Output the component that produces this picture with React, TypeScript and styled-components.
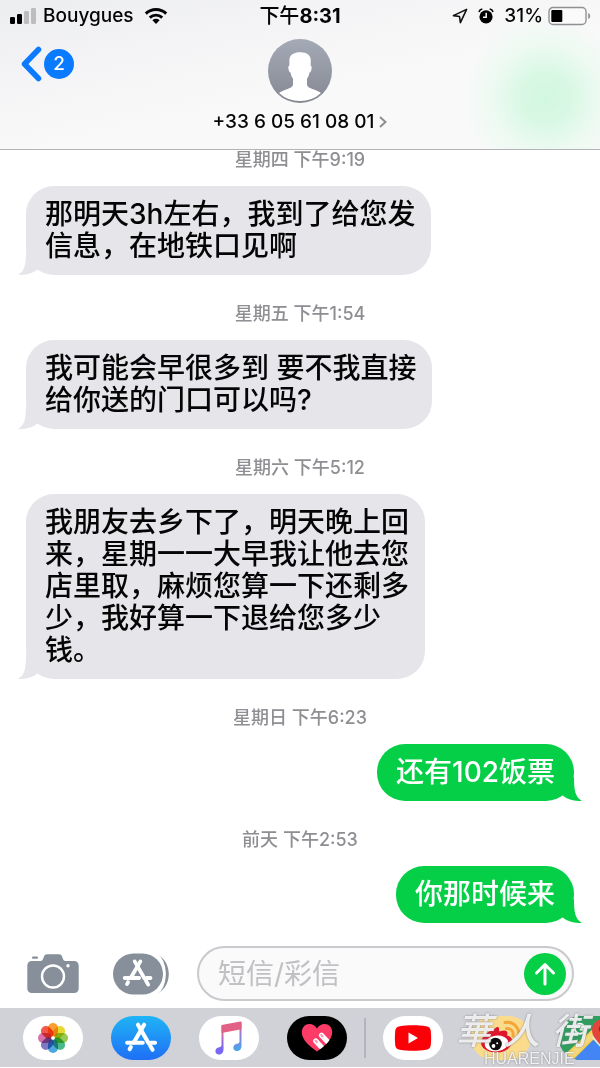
import React from "react";
import styled, { createGlobalStyle } from "styled-components";

const GlobalStyle = createGlobalStyle`
  * { box-sizing: border-box; }
  body {
    margin: 0;
    background: #fff;
    color: #050505;
    font-family: Inter, "Noto Sans CJK SC", sans-serif;
    font-weight: 500;
  }
  button { border: 0; padding: 0; background: none; font: inherit; color: inherit; cursor: pointer; }
  svg { display: block; flex: none; }
`;

const Screen = styled.div`
  min-height: 100vh;
  display: flex;
  flex-direction: column;
  overflow: hidden;
`;

const Header = styled.header`
  border-bottom: 1px solid #b4b4b8;
  background:
    radial-gradient(circle 84px at calc(100% - 54px) 98px, #d2f7df 0%, #d9f8e4 30%, rgba(232, 250, 239, 0.75) 62%, rgba(248, 249, 249, 0) 100%),
    linear-gradient(168deg, #ecedef 0%, #f4f4f6 30%, #f9f9f9 58%);
`;

const StatusBar = styled.div`
  height: 32px;
  padding: 0 9px;
  display: grid;
  grid-template-columns: 1fr auto 1fr;
  align-items: center;
  font-size: 19px;
  line-height: 32px;
`;

const StatusGroup = styled.div<{ $end?: boolean }>`
  display: flex;
  align-items: center;
  gap: ${(p) => (p.$end ? "10px" : "6px")};
  justify-content: ${(p) => (p.$end ? "flex-end" : "flex-start")};
`;

const Carrier = styled.span`
  margin-right: 4px;
`;

const Clock = styled.time`
  font-size: 20px;
  b { font-weight: 700; }
`;

const BatteryGroup = styled.span`
  display: flex;
  align-items: center;
  gap: 5px;
`;

const NavBar = styled.nav`
  padding: 7px 20px 16px;
  display: grid;
  grid-template-columns: 1fr auto 1fr;
`;

const BackButton = styled.button`
  height: 50px;
  display: flex;
  align-items: center;
  justify-self: start;
  gap: 2px;
`;

const UnreadCount = styled.span`
  width: 30px;
  height: 30px;
  border-radius: 50%;
  background: #0a7aff;
  color: #fff;
  font-size: 19px;
  line-height: 30px;
  text-align: center;
`;

const Contact = styled.button`
  display: flex;
  flex-direction: column;
  align-items: center;
  gap: 8px;
`;

const ContactName = styled.span`
  display: flex;
  align-items: center;
  gap: 5px;
  font-size: 19px;
  line-height: 22px;
`;

const Conversation = styled.main`
  flex: 1;
  padding: 0 26px 15px;
  display: flex;
  flex-direction: column;
`;

const Entry = styled.section`
  display: flex;
  flex-direction: column;
  gap: 16px;
  & + & { margin-top: 29px; }
`;

const Stamp = styled.time`
  align-self: center;
  color: #8e8e93;
  font-size: 18px;
  line-height: 20px;
`;

const Bubble = styled.p<{ $sent?: boolean }>`
  position: relative;
  align-self: ${(p) => (p.$sent ? "flex-end" : "flex-start")};
  margin: 0;
  padding: ${(p) => (p.$sent ? "12px 19px 13px 19px" : "12px 16px 13px 19px")};
  border-radius: 28px;
  background: ${(p) => (p.$sent ? "#04cf47" : "#e5e5ea")};
  color: ${(p) => (p.$sent ? "#fff" : "#050505")};
  font-size: 28px;
  line-height: 32px;
  white-space: pre-line;
`;

const Tail = styled.svg<{ $sent?: boolean }>`
  position: absolute;
  bottom: 0;
  ${(p) => (p.$sent ? "right: -8px; transform: scaleX(-1);" : "left: -8px;")}
  fill: ${(p) => (p.$sent ? "#04cf47" : "#e5e5ea")};
`;

const Composer = styled.form`
  padding: 8px 26px 7px 27px;
  display: flex;
  align-items: center;
`;

const ToolButton = styled.button`
  margin-right: 34px;
  & + & { margin-right: 28px; }
`;

const Field = styled.div`
  flex: 1;
  min-width: 0;
  height: 55px;
  padding: 0 6px 0 19px;
  display: flex;
  align-items: center;
  border: 2px solid #c9c9ce;
  border-radius: 28px;
  background: #fafafa;
`;

const MessageInput = styled.input`
  flex: 1;
  min-width: 0;
  padding: 0;
  border: 0;
  outline: 0;
  background: none;
  font: inherit;
  font-size: 28px;
  font-weight: 400;
  line-height: 40px;
  &::placeholder { color: #c0c0c5; opacity: 1; }
`;

const SendButton = styled.button`
  width: 42px;
  height: 42px;
  display: grid;
  place-items: center;
  border-radius: 50%;
  background: #04cf47;
`;

const Dock = styled.footer`
  position: relative;
  height: 59px;
  margin-bottom: 1px;
  padding-left: 23px;
  display: flex;
  align-items: center;
  background: #d1d2d8;
`;

const DockGroup = styled.div`
  display: flex;
  flex: none;
  gap: 28px;
`;

const Divider = styled.span`
  flex: none;
  width: 2px;
  height: 40px;
  margin: 0 17px;
  background: #b3b5bc;
`;

const AppButton = styled.button<{ $bg: string }>`
  width: 60px;
  height: 44px;
  flex: none;
  display: grid;
  place-items: center;
  overflow: hidden;
  border-radius: 22px;
  background: ${(p) => p.$bg};
`;

const Watermark = styled.div`
  position: absolute;
  right: 0;
  bottom: 0;
  width: 144px;
  color: rgba(255, 255, 255, 0.85);
  text-shadow: 0 0 2px #77777c;
  pointer-events: none;
`;

const WatermarkScript = styled.div`
  display: flex;
  justify-content: space-between;
  padding-right: 12px;
  font-family: "Noto Sans CJK TC", sans-serif;
  font-style: italic;
  font-size: 36px;
  line-height: 46px;
`;

const WatermarkLatin = styled.div`
  padding-left: 28px;
  font-family: "Liberation Sans", sans-serif;
  font-size: 16px;
  line-height: 16px;
`;

function SignalIcon() {
  return (
    <svg width="28" height="18" viewBox="0 0 28 18" aria-hidden="true">
      <rect x="1" y="10" width="5" height="7" rx="1.3" />
      <rect x="8" y="7" width="5" height="10" rx="1.3" />
      <rect x="15" y="4" width="5" height="13" rx="1.3" fill="#bdbdc0" />
      <rect x="22" y="1" width="5" height="16" rx="1.3" fill="#bdbdc0" />
    </svg>
  );
}

function WifiIcon() {
  return (
    <svg width="24" height="18" viewBox="0 0 24 18" fill="none" stroke="#050505" strokeWidth="2.9" aria-hidden="true">
      <path d="M1.8 6.6a14.6 14.6 0 0 1 20.4 0" />
      <path d="M5.8 10.6a9 9 0 0 1 12.4 0" />
      <path d="M12 17l-3.6-3.7a5.2 5.2 0 0 1 7.2 0z" fill="#050505" stroke="none" />
    </svg>
  );
}

function LocationIcon() {
  return (
    <svg width="16" height="16" viewBox="0 0 16 16" fill="none" stroke="#111" strokeWidth="1.6" strokeLinejoin="round" aria-hidden="true">
      <path d="M14.6 1.4 1.4 7.6l6.1.9.9 6.1z" />
    </svg>
  );
}

function AlarmIcon() {
  return (
    <svg width="16" height="16" viewBox="0 0 16 16" aria-hidden="true">
      <circle cx="8" cy="8.8" r="6.6" />
      <path d="M.9 3.900a4.400 4.400 0 0 1 3.400-2.900M15.100 3.900a4.400 4.400 0 0 0-3.400-2.900" fill="none" stroke="#050505" strokeWidth="1.500" />
      <path d="M8.200 4.800v4.500H5" fill="none" stroke="#f7f7f8" strokeWidth="1.500" />
    </svg>
  );
}

function BatteryIcon() {
  return (
    <svg width="43" height="20" viewBox="0 0 43 20" aria-hidden="true">
      <rect x="1" y="1.5" width="37" height="17" rx="4" fill="#fafafa" stroke="#8f9094" strokeWidth="1.4" />
      <rect x="3.3" y="4" width="11" height="12" rx="1" />
      <path d="M40.2 7v6c1.3-.5 2-1.600 2-3s-.7-2.500-2-3z" fill="#8f9094" />
    </svg>
  );
}

function Avatar() {
  return (
    <svg width="64" height="64" viewBox="0 0 64 64" aria-hidden="true">
      <defs>
        <linearGradient id="avatar-bg" x1="0" y1="0" x2="0" y2="1">
          <stop offset="0" stopColor="#a4aab6" />
          <stop offset="1" stopColor="#858891" />
        </linearGradient>
      </defs>
      <circle cx="32" cy="32" r="32" fill="url(#avatar-bg)" />
      <path
        d="M21.400 22c-.4-6.200 4.500-8.800 11-8.800s11 3.200 10.400 9.400l-.2 3.800c1.300.4 1.200 2.300.8 4.200-.4 1.800-.9 3-2 3.200-.5 2.800-1.200 4.400-2.400 5.800v5.600c0 2.500 2.500 3.600 5.300 4.700 3.200 1.200 6.200 2 8.700 4A31 31 0 0 1 32 62 31 31 0 0 1 11 53.900c2.500-2 5.500-2.800 8.700-4 2.800-1.100 5.300-2.200 5.300-4.700v-5.600c-1.200-1.400-1.900-3-2.400-5.800-1.100-.2-1.600-1.400-2-3.200-.4-1.900-.5-3.800.8-4.200z"
        fill="#fff"
      />
    </svg>
  );
}

function CameraIcon() {
  return (
    <svg width="52" height="40" viewBox="0 0 52 40" aria-hidden="true">
      <g fill="#868f9a">
        <rect x="5" y="2.600" width="6" height="2.200" rx="1" />
        <path d="M5 7h8.500c1.500 0 2-.8 2.500-2l1-2.600C17.500 1 18.500.3 20 .3h12c1.500 0 2.500.7 3 2.100L36 5c.5 1.200 1 2 2.500 2H47c3 0 4.700 1.700 4.700 4.700v22.600c0 3-1.700 4.700-4.700 4.700H5c-3 0-4.700-1.700-4.700-4.700V11.700C.3 8.700 2 7 5 7z" />
      </g>
      <circle cx="26" cy="22.500" r="11" fill="none" stroke="#fff" strokeWidth="2.400" />
      <circle cx="41" cy="11.800" r="1.700" fill="#fff" />
    </svg>
  );
}

function StoreGlyph() {
  return (
    <g fill="none" stroke="#fff" strokeWidth="3.800" strokeLinecap="round">
      <path d="M-2.800-11.800 7.100 5.400M8.600 7.800l2.100 3.600" />
      <path d="M2.900-11.800-6.700 4.600M-9.400 8.900l-1.100 2" />
      <path d="M-12.800 4.800H1.600M9 4.800h4" />
    </g>
  );
}

function StoreToolIcon() {
  return (
    <svg width="56" height="42" viewBox="0 0 56 42" aria-hidden="true">
      <rect x="0" y="0.500" width="50" height="41" rx="20.500" fill="#868f9a" />
      <path d="M41.500 1C48 4 52.500 10 52.500 21S48 38 41.500 41c8-1.500 14.300-9.500 14.300-20S49.500 2.500 41.500 1z" fill="#868f9a" />
      <path d="M41.500.5C48 4 51.500 11 51.500 21S48 38 41.500 41.500" fill="none" stroke="#fff" strokeWidth="2.500" />
      <g transform="translate(24.500 20.200)"><StoreGlyph /></g>
    </svg>
  );
}

function PhotosIcon() {
  const petals = ["#f9941c", "#e4d51c", "#8cc63f", "#35b27c", "#3b9ddc", "#6f6cba", "#d263a0", "#ef4636"];
  return (
    <svg width="32" height="32" viewBox="-16 -16 32 32" aria-hidden="true">
      {petals.map((color, i) => (
        <rect key={color} x="-5" y="-15" width="10" height="13.500" rx="5" fill={color} fillOpacity="0.9" transform={`rotate(${i * 45})`} style={{ mixBlendMode: "multiply" }} />
      ))}
      <circle r="1.500" fill="#fff" />
    </svg>
  );
}

function StoreIcon() {
  return (
    <svg width="36" height="36" viewBox="-18 -18 36 36" aria-hidden="true">
      <g transform="translate(0 -0.500) scale(1.080)"><StoreGlyph /></g>
    </svg>
  );
}

function MusicIcon() {
  return (
    <svg width="28" height="34" viewBox="0 0 28 34" aria-hidden="true">
      <defs>
        <linearGradient id="note" x1="0" y1="0" x2="0" y2="1">
          <stop offset="0" stopColor="#f3566b" />
          <stop offset=".3" stopColor="#d769a6" />
          <stop offset=".68" stopColor="#8266ee" />
          <stop offset="1" stopColor="#7468f4" />
        </linearGradient>
        <linearGradient id="note-right" x1="0" y1="0" x2="0" y2="1">
          <stop offset="0" stopColor="#e7587a" />
          <stop offset=".4" stopColor="#9f7ad0" />
          <stop offset="1" stopColor="#43a8ee" />
        </linearGradient>
      </defs>
      <path d="M8.500 4v24.500c0 3-2 5-4.700 5C1.700 33.500.4 32 .4 30.200c0-2.200 1.600-3.500 3.700-3.900 1.500-.3 2.400-.8 2.400-2.200V4z" fill="url(#note)" />
      <path d="M26.500 1v24c0 3-2 5-4.700 5-2.100 0-3.500-1.400-3.500-3.300 0-2.200 1.600-3.500 3.700-3.900 1.500-.3 2.500-.8 2.500-2.200V5z" fill="url(#note-right)" />
      <path d="M8 3.800 25.200.6c.9-.2 1.300.1 1.300 1v6.700L6.500 12V5.600c0-1 .4-1.600 1.500-1.800z" fill="#e25f86" />
    </svg>
  );
}

function HeartIcon() {
  return (
    <svg width="32" height="30" viewBox="0 0 32 30" aria-hidden="true">
      <defs>
        <clipPath id="heart-shape">
          <path d="M16 28.500C9 23.500.8 17 .8 9.200.8 4.500 4.200 1 8.500 1 11.500 1 14.300 2.700 16 5.500 17.700 2.700 20.500 1 23.500 1c4.300 0 7.700 3.500 7.700 8.200 0 7.800-8.200 14.300-15.200 19.300z" />
        </clipPath>
      </defs>
      <g clipPath="url(#heart-shape)">
        <rect width="32" height="30" fill="#fc3c67" />
        <g stroke="#fff" strokeWidth="5.200" strokeLinecap="round">
          <path d="M14.800 18 24 28M20.500 12.300 30 22.500" />
        </g>
        <g stroke="#fc9ab0" strokeWidth="2.200" strokeLinecap="round">
          <path d="M14.600 17.800l1.200 1.300M20.300 12.100l1.200 1.300" />
        </g>
      </g>
    </svg>
  );
}

function YoutubeIcon() {
  return (
    <svg width="38" height="28" viewBox="0 0 38 28" aria-hidden="true">
      <path d="M6 2.200C13 .9 25 .9 32 2.200c3.300.6 4.500 2 4.800 4.800.5 4.700.5 9.300 0 14-.3 2.800-1.500 4.200-4.800 4.800-7 1.300-19 1.300-26 0C2.700 25.200 1.500 23.800 1.200 21 .7 16.300.7 11.700 1.200 7 1.500 4.200 2.700 2.800 6 2.200z" fill="#fb0007" />
      <path d="M14.500 8.500v11L24 14z" fill="#fff" />
    </svg>
  );
}

function WeiboIcon() {
  return (
    <svg width="60" height="44" viewBox="0 0 60 44" aria-hidden="true">
      <path d="M34 6.500c8-1.500 15 5 13.500 13.500M35.500 12.500c4.500-.5 7.500 3 6.500 7.500" fill="none" stroke="#f3a63b" strokeWidth="3" strokeLinecap="round" />
      <path d="M24 12.500c3-2.500 4.500-1.500 4 2-.1 1 .5 1 2 .6 5-1.500 7.500.4 6 4.400 4 1 5.500 3.500 5 6.500-.8 6-7.500 10.500-16 10.500S9.500 32 10 26c.5-5 7-11 14-13.500z" fill="#e0142b" />
      <ellipse cx="25.500" cy="27.500" rx="11.800" ry="7.800" fill="#fff" transform="rotate(-7 25.500 27.500)" />
      <circle cx="24.500" cy="28" r="6.300" fill="#0c0a0a" />
      <circle cx="22.500" cy="30" r="1.900" fill="#fff" />
      <circle cx="26.200" cy="27.200" r="1" fill="#fff" />
    </svg>
  );
}

function MapsIcon() {
  return (
    <svg width="60" height="44" viewBox="0 0 60 44" aria-hidden="true">
      <rect width="60" height="44" fill="#2f9e5f" />
      <path d="M12 44 33 23l22 21z" fill="#4385f5" />
      <path d="M4 40 36 11l5 6L12 46z" fill="#fbd04b" />
      <path d="M2 44 33 16l2.500 4L12 44z" fill="#f0e2b4" fillOpacity=".5" />
      <path d="M33 22 38 16l20 22-5 6z" fill="#e8eaed" />
      <path d="M24.500 9.300a5 5 0 1 0 1.200 4.200h-4.900" fill="none" stroke="#fff" strokeWidth="2" />
      <path d="M43 34c-1-8-10-11-10-20a11 11 0 0 1 22 0c0 9-10 12-12 20z" fill="#e2453a" />
      <circle cx="44" cy="13" r="4" fill="#8e1f1b" />
    </svg>
  );
}

type Message = { stamp: string; text: string; sent?: boolean };

const messages: Message[] = [
  { stamp: "星期四 下午9:19", text: "那明天3h左右，我到了给您发\n信息，在地铁口见啊" },
  { stamp: "星期五 下午1:54", text: "我可能会早很多到 要不我直接\n给你送的门口可以吗?" },
  {
    stamp: "星期六 下午5:12",
    text: "我朋友去乡下了，明天晚上回\n来，星期一一大早我让他去您\n店里取，麻烦您算一下还剩多\n少，我好算一下退给您多少\n钱。",
  },
  { stamp: "星期日 下午6:23", text: "还有102饭票", sent: true },
  { stamp: "前天 下午2:53", text: "你那时候来", sent: true },
];

export default function App() {
  return (
    <Screen lang="zh-CN">
      <GlobalStyle />
      <Header>
        <StatusBar>
          <StatusGroup>
            <SignalIcon />
            <Carrier>Bouygues</Carrier>
            <WifiIcon />
          </StatusGroup>
          <Clock>下午<b>8:31</b></Clock>
          <StatusGroup $end>
            <LocationIcon />
            <AlarmIcon />
            <BatteryGroup>
              31%
              <BatteryIcon />
            </BatteryGroup>
          </StatusGroup>
        </StatusBar>
        <NavBar>
          <BackButton type="button" aria-label="返回">
            <svg width="22" height="36" viewBox="0 0 22 36" fill="none" stroke="#0a7aff" strokeWidth="5.500" strokeLinecap="round" strokeLinejoin="round" aria-hidden="true">
              <path d="M18.500 3.500 4.500 18l14 14.500" />
            </svg>
            <UnreadCount>2</UnreadCount>
          </BackButton>
          <Contact type="button">
            <Avatar />
            <ContactName>
              +33 6 05 61 08 01
              <svg width="8" height="12" viewBox="0 0 8 12" fill="none" stroke="#8e8e93" strokeWidth="2" aria-hidden="true">
                <path d="M1 1l5.500 5L1 11" />
              </svg>
            </ContactName>
          </Contact>
        </NavBar>
      </Header>

      <Conversation>
        {messages.map((m) => (
          <Entry key={m.stamp}>
            <Stamp>{m.stamp}</Stamp>
            <Bubble $sent={m.sent}>
              {m.text}
              <Tail $sent={m.sent} width="24" height="24" viewBox="0 0 24 24" aria-hidden="true">
                <path d="M8 0C8 13 7 20 0 24c8 .3 14-1.500 19-5.300L24 12z" />
              </Tail>
            </Bubble>
          </Entry>
        ))}
      </Conversation>

      <Composer onSubmit={(e) => e.preventDefault()}>
        <ToolButton type="button" aria-label="相机"><CameraIcon /></ToolButton>
        <ToolButton type="button" aria-label="应用"><StoreToolIcon /></ToolButton>
        <Field>
          <MessageInput type="text" placeholder="短信/彩信" aria-label="短信/彩信" />
          <SendButton type="submit" aria-label="发送">
            <svg width="22" height="24" viewBox="0 0 22 24" fill="none" stroke="#fff" strokeWidth="3" strokeLinecap="round" strokeLinejoin="round" aria-hidden="true">
              <path d="M11 22V2.500M2.500 11 11 2.500l8.500 8.500" />
            </svg>
          </SendButton>
        </Field>
      </Composer>

      <Dock>
        <DockGroup>
          <AppButton type="button" aria-label="照片" $bg="#fff"><PhotosIcon /></AppButton>
          <AppButton type="button" aria-label="App Store" $bg="linear-gradient(#1fb4f5, #1f6ff5)"><StoreIcon /></AppButton>
          <AppButton type="button" aria-label="音乐" $bg="#fff"><MusicIcon /></AppButton>
          <AppButton type="button" aria-label="Digital Touch" $bg="#000"><HeartIcon /></AppButton>
        </DockGroup>
        <Divider />
        <DockGroup>
          <AppButton type="button" aria-label="YouTube" $bg="#fff"><YoutubeIcon /></AppButton>
          <AppButton type="button" aria-label="微博" $bg="#fbdc8c"><WeiboIcon /></AppButton>
          <AppButton type="button" aria-label="地图" $bg="#2f9e5f"><MapsIcon /></AppButton>
        </DockGroup>
        <Watermark>
          <WatermarkScript><span>華</span><span>人</span><span>街</span></WatermarkScript>
          <WatermarkLatin>HUARENJIE</WatermarkLatin>
        </Watermark>
      </Dock>
    </Screen>
  );
}
